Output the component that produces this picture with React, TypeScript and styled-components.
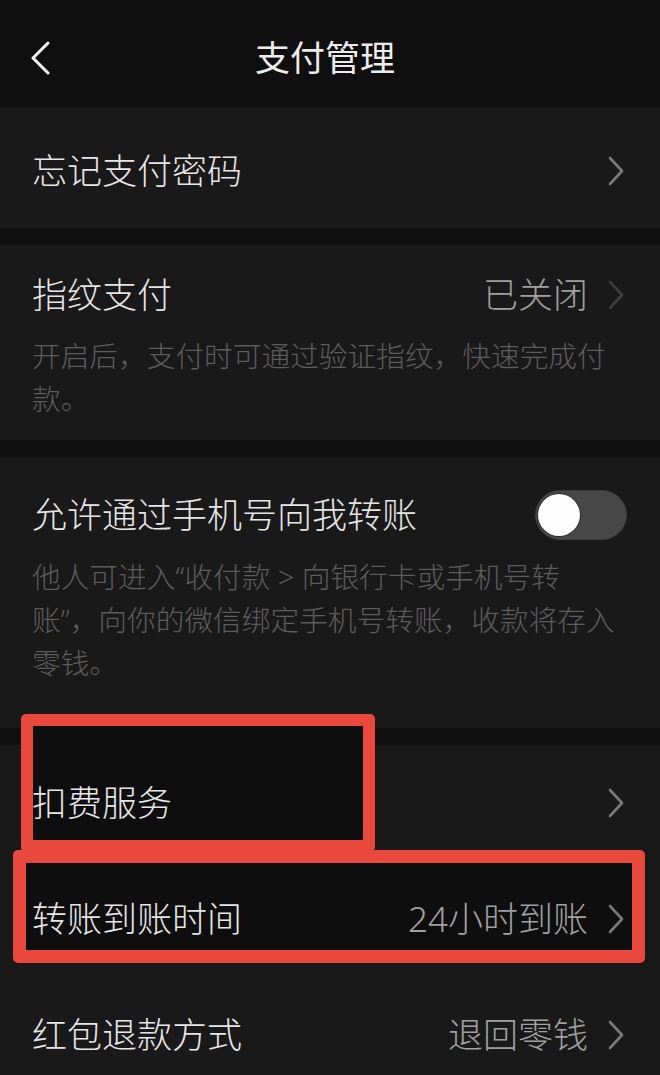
import React from 'react';
import styled, { createGlobalStyle } from 'styled-components';

const GlobalStyle = createGlobalStyle`
  html, body {
    margin: 0;
    padding: 0;
    background: #0f0f0f;
  }
  body {
    font-family: "Noto Sans", "Noto Sans CJK SC", sans-serif;
    -webkit-font-smoothing: antialiased;
  }
`;

const Page = styled.div`
  width: 660px;
  height: 1075px;
  overflow: hidden;
  background: #0f0f0f;
`;

const Header = styled.header`
  height: 107px;
  display: grid;
  grid-template-columns: 86px 1fr 96px;
  align-items: start;
  padding-top: 30px;
  box-sizing: border-box;
  background: #0f0f0f;
`;

const BackButton = styled.button`
  background: none;
  border: none;
  padding: 0 0 0 30px;
  height: 56px;
  display: flex;
  align-items: center;
  cursor: pointer;
`;

const Title = styled.h1`
  margin: 0;
  font-size: 35px;
  font-weight: 400;
  line-height: 56px;
  color: #ececec;
  text-align: center;
`;

const List = styled.div`
  display: flex;
  flex-direction: column;
  gap: 17px;
  margin-top: 17px;
`;

const Section = styled.section<{ $pt?: number; $pb?: number }>`
  position: relative;
  background: #191919;
  padding: ${(p) => p.$pt ?? 0}px 33px ${(p) => p.$pb ?? 0}px 32px;
`;

const Row = styled.div<{ $h: number }>`
  position: relative;
  z-index: 1;
  height: ${(p) => p.$h}px;
  display: flex;
  align-items: center;
  justify-content: space-between;
`;

const Label = styled.span`
  font-size: 35px;
  font-weight: 300;
  line-height: 48px;
  color: #e6e6e6;
`;

const Trail = styled.div`
  display: flex;
  align-items: center;
  gap: 19px;
`;

const Value = styled.span`
  font-size: 35px;
  font-weight: 300;
  line-height: 48px;
  color: #a0a0a0;
`;

const Desc = styled.p`
  margin: 15px 0 0;
  font-size: 28.7px;
  font-weight: 300;
  line-height: 43px;
  color: #5c5c5c;
  white-space: nowrap;
`;

const Toggle = styled.div<{ $on?: boolean }>`
  position: relative;
  width: 92px;
  height: 50px;
  box-sizing: border-box;
  border-radius: 25px;
  background: ${(p) => (p.$on ? '#07c160' : '#474747')};
  border: 1px solid #3b3b3b;
`;

const Knob = styled.span`
  position: absolute;
  top: 3px;
  left: 2px;
  width: 42px;
  height: 42px;
  border-radius: 50%;
  background: #fdfdfd;
  box-shadow: 0 0 0 1px #2e2e2e;
`;

const Highlight = styled.div<{ $b: number }>`
  position: absolute;
  z-index: 0;
  box-sizing: border-box;
  border: ${(p) => p.$b}px solid #e8493c;
  border-radius: 5px;
  background: #0e0e0e;
`;

const Chevron = ({ color = '#7a7a7a' }: { color?: string }) => (
  <svg width="18" height="30" viewBox="0 0 18 30" style={{ marginRight: 2 }}>
    <polyline
      points="3,2 15,15 3,28"
      fill="none"
      stroke={color}
      strokeWidth="2.6"
      strokeLinecap="round"
      strokeLinejoin="round"
    />
  </svg>
);

const BackIcon = () => (
  <svg width="20" height="36" viewBox="0 0 20 36">
    <polyline
      points="18,3 3,18 18,33"
      fill="none"
      stroke="#f2f2f2"
      strokeWidth="3"
      strokeLinecap="round"
      strokeLinejoin="round"
    />
  </svg>
);

export default function App() {
  return (
    <Page>
      <GlobalStyle />
      <Header>
        <BackButton aria-label="返回">
          <BackIcon />
        </BackButton>
        <Title>支付管理</Title>
        <div />
      </Header>

      <Section $pt={6}>
        <Row $h={115}>
          <Label>忘记支付密码</Label>
          <Chevron />
        </Row>
      </Section>

      <List>
        <Section $pt={26} $pb={20}>
          <Row $h={48}>
            <Label>指纹支付</Label>
            <Trail>
              <Value>已关闭</Value>
              <Chevron color="#3e3e3e" />
            </Trail>
          </Row>
          <Desc>
            开启后，支付时可通过验证指纹，快速完成付
            <br />
            款。
          </Desc>
        </Section>

        <Section $pt={33} $pb={44}>
          <Row $h={50}>
            <Label>允许通过手机号向我转账</Label>
            <Toggle>
              <Knob />
            </Toggle>
          </Row>
          <Desc>
            他人可进入“收付款 &gt; 向银行卡或手机号转
            <br />
            账”，向你的微信绑定手机号转账，收款将存入
            <br />
            零钱。
          </Desc>
        </Section>

        <Section>
          <Highlight $b={12} style={{ left: 21, top: -31, width: 354, height: 138 }} />
          <Highlight $b={13} style={{ left: 13, top: 105, width: 632, height: 113 }} />
          <Row $h={116}>
            <Label>扣费服务</Label>
            <Chevron />
          </Row>
          <Row $h={116}>
            <Label>转账到账时间</Label>
            <Trail>
              <Value>24小时到账</Value>
              <Chevron />
            </Trail>
          </Row>
          <Row $h={116}>
            <Label>红包退款方式</Label>
            <Trail>
              <Value>退回零钱</Value>
              <Chevron />
            </Trail>
          </Row>
        </Section>
      </List>
    </Page>
  );
}
